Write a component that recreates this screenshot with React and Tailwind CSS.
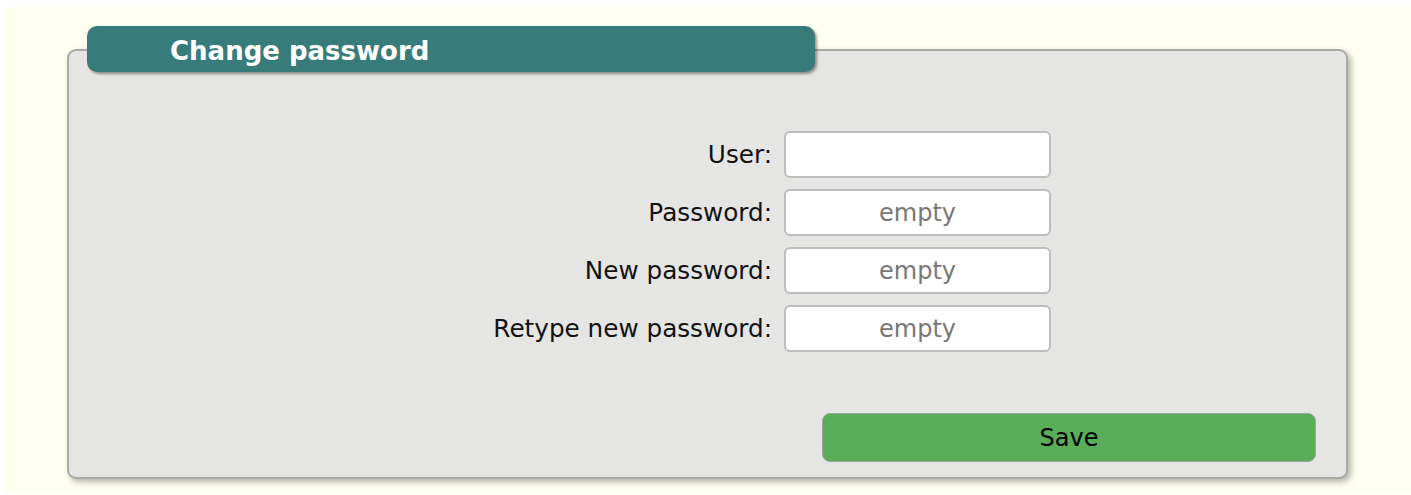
import React, { useState } from 'react';

const fields = [
  { id: 'user', label: 'User:', type: 'text', placeholder: '' },
  { id: 'password', label: 'Password:', type: 'password', placeholder: 'empty' },
  { id: 'newPassword', label: 'New password:', type: 'password', placeholder: 'empty' },
  { id: 'retype', label: 'Retype new password:', type: 'password', placeholder: 'empty' },
];

export default function App() {
  const [values, setValues] = useState({ user: '', password: '', newPassword: '', retype: '' });

  const handleSubmit = (e) => {
    e.preventDefault();
  };

  return (
    <div className="min-h-[495px] bg-white font-['DejaVu_Sans',Verdana,sans-serif]">
      <div className="ml-[5px] mt-[7px] h-[487px] bg-[#fefff0] pt-[19px] pl-[62px]">
        <div className="w-[1281px]">
          {/* Header tab overlapping the panel */}
          <div className="relative z-10 ml-[20px] mb-[-23px] flex h-[46px] w-[728px] items-center rounded-[10px] bg-[#387b7b] pl-[83px] pt-[3px] shadow-[2px_2px_3px_rgba(0,0,0,0.4)]">
            <span className="text-[26px] font-bold leading-none text-white">Change password</span>
          </div>

          <form
            onSubmit={handleSubmit}
            className="h-[430px] rounded-[9px] border-2 border-[#a9a9a8] bg-[#e5e5e3] pt-[80px] shadow-[3px_3px_6px_rgba(0,0,0,0.3)]"
          >
            <div className="ml-[403px] flex flex-col gap-[11px]">
              {fields.map((f) => (
                <div key={f.id} className="flex items-center gap-[12px]">
                  <label htmlFor={f.id} className="w-[300px] text-right text-[24.7px] text-[#111]">
                    {f.label}
                  </label>
                  <input
                    id={f.id}
                    type={f.type}
                    placeholder={f.placeholder}
                    value={values[f.id]}
                    onChange={(e) => setValues({ ...values, [f.id]: e.target.value })}
                    className="h-[47px] w-[267px] rounded-[6px] border-2 border-[#bdbdbd] bg-white px-2 text-center text-[24px] text-black placeholder:text-[#777] outline-none"
                  />
                </div>
              ))}
            </div>

            <button
              type="submit"
              className="ml-[753px] mt-[61px] h-[49px] w-[494px] rounded-[8px] border border-[#9aa79a] bg-[#5aad57] text-[24px] text-black"
            >
              Save
            </button>
          </form>
        </div>
      </div>
    </div>
  );
}
